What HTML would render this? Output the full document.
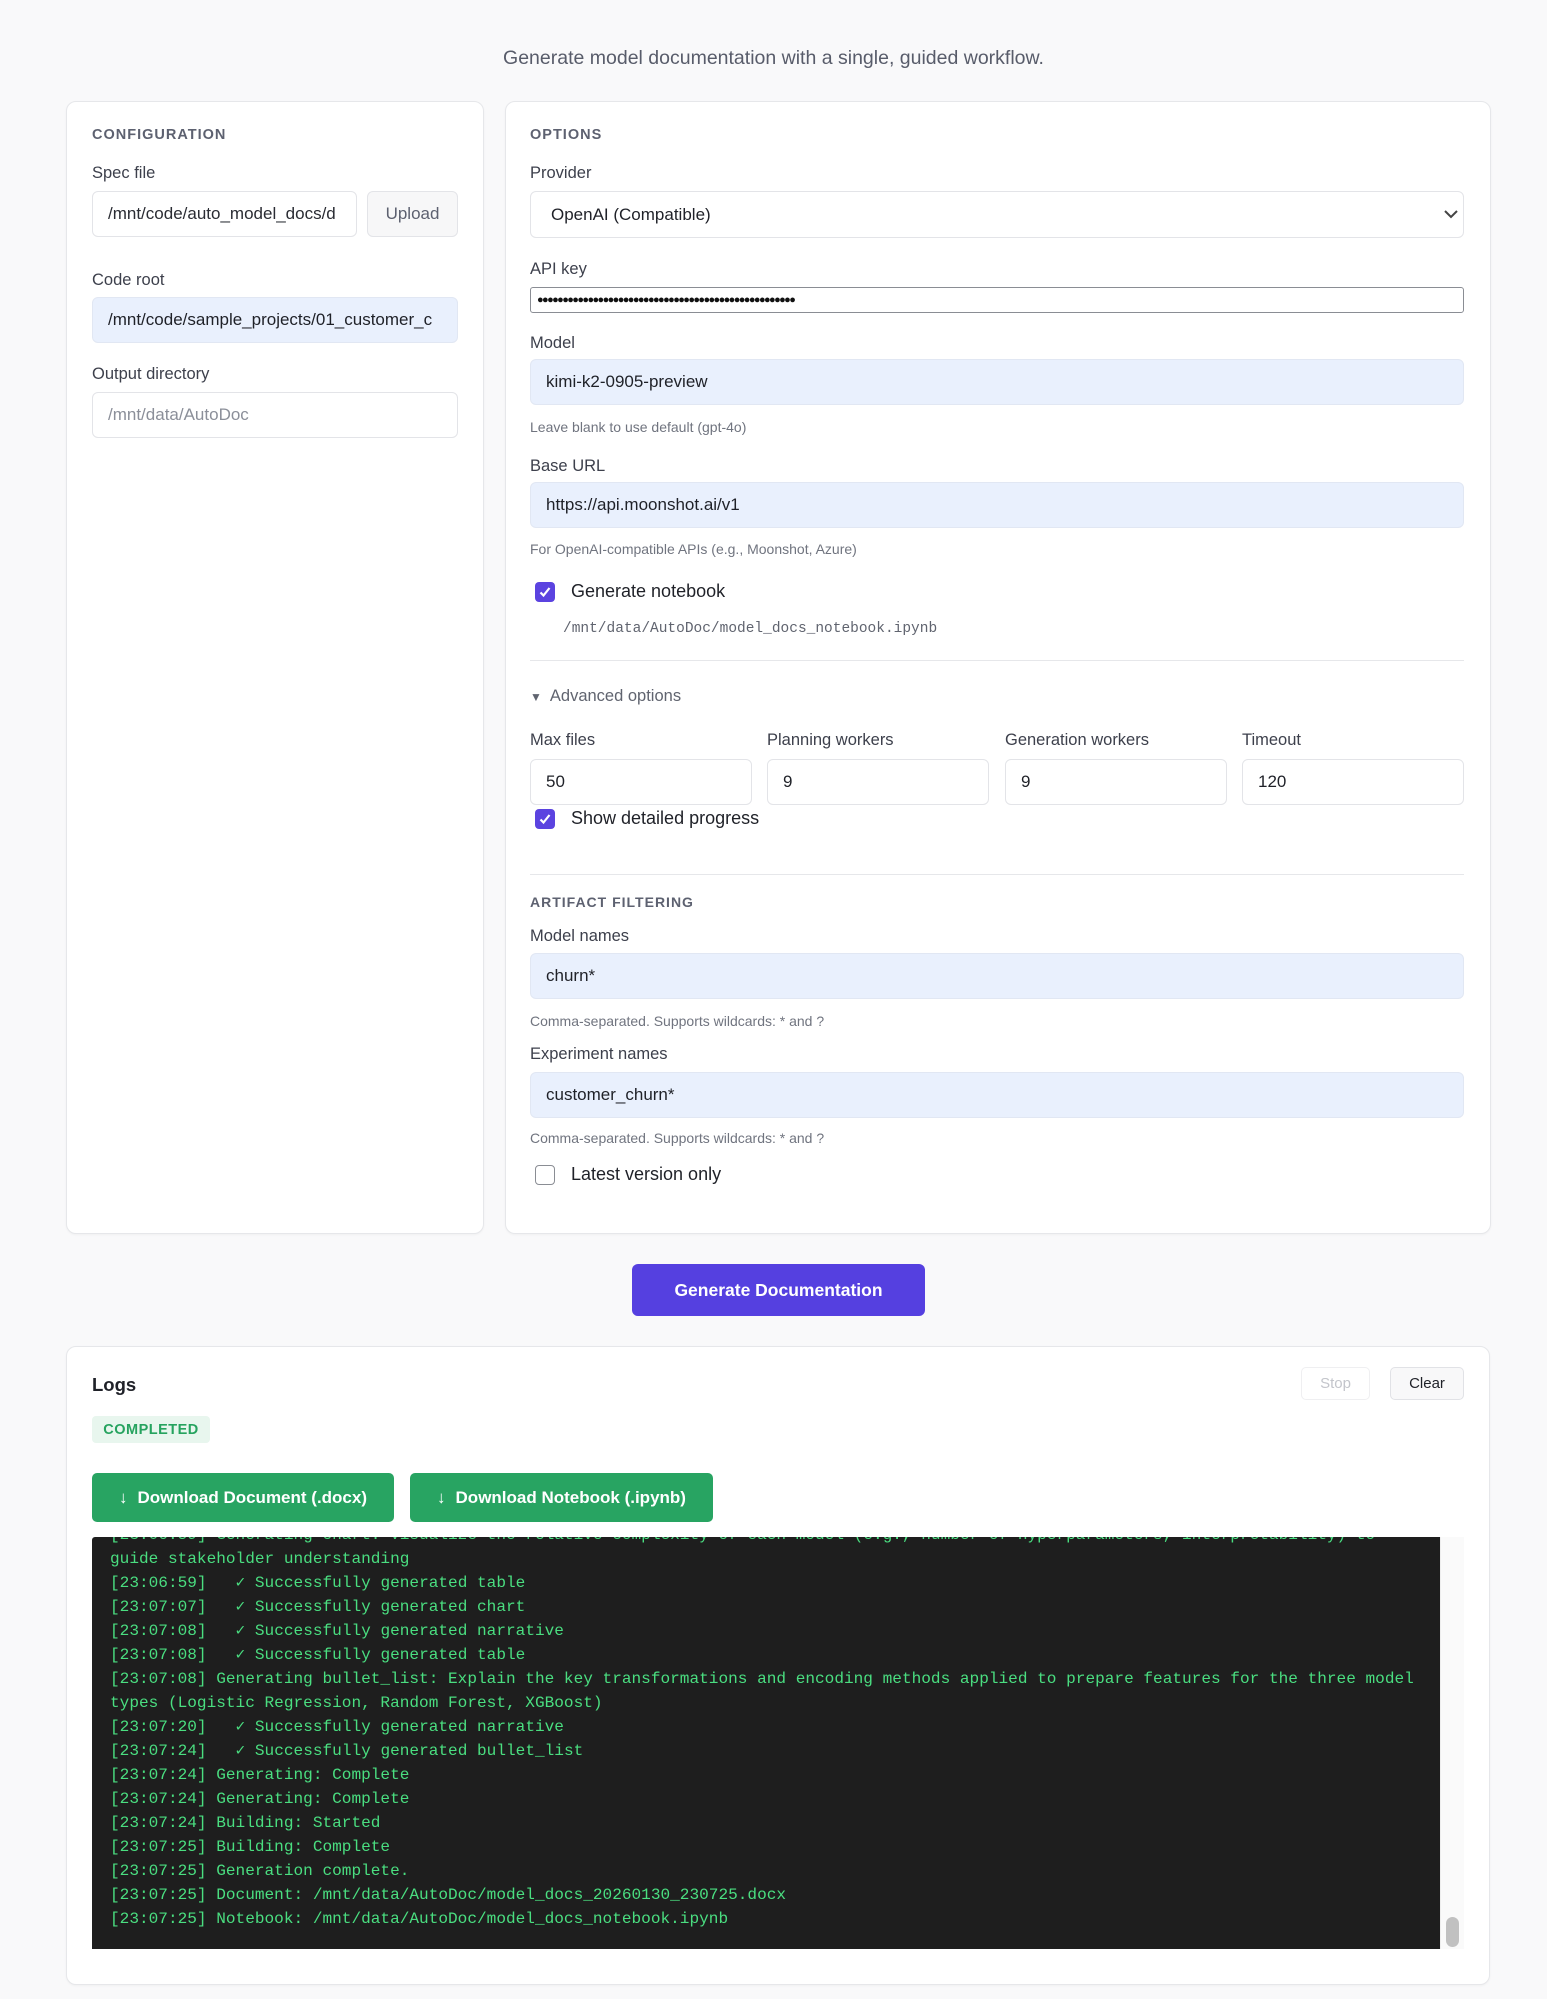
<!DOCTYPE html>
<html><head><meta charset="utf-8"><style>
*{box-sizing:border-box;margin:0;padding:0}
body{width:1547px;height:1999px;background:#f9f9fa;font-family:"Liberation Sans",sans-serif;color:#1f2128;position:relative;overflow:hidden}
.a{position:absolute}
.card{position:absolute;background:#fff;border:1px solid #e6e7ea;border-radius:10px;box-shadow:0 1px 2px rgba(0,0,0,.04)}
.sec{font-size:14.5px;font-weight:bold;letter-spacing:1px;color:#5d6170}
.lbl{font-size:16.5px;color:#3d404c;font-weight:500}
.in{position:absolute;border:1px solid #e3e4e8;border-radius:6px;background:#fff;font-size:17px;padding-left:15px;display:flex;align-items:center;color:#1f2128;white-space:nowrap;overflow:hidden}
.fill{background:#e9f0fd;border-color:#e1e7f3}
.hint{font-size:14px;color:#70747f}
.cb{position:absolute;width:20px;height:20px;border-radius:4px;background:#5b43e0;}
.cb svg{position:absolute;left:3px;top:3px}
.cbl{font-size:18px;color:#1f2128;font-weight:500}
.div{position:absolute;height:1px;background:#e6e7ea}
.term div{height:24px;line-height:24px;white-space:pre}
</style></head><body>
<div class="a" style="left:0;width:1547px;top:47px;text-align:center;font-size:19.5px;color:#585c6a">Generate model documentation with a single, guided workflow.</div>

<div class="card" style="left:66px;top:101px;width:418px;height:1133px"></div>
<div class="a sec" style="left:92px;top:127px">CONFIGURATION</div>
<div class="a lbl" style="left:92px;top:164px">Spec file</div>
<div class="in" style="left:92px;top:191px;width:265px;height:46px;color:#2a2c33">/mnt/code/auto_model_docs/d</div>
<div class="in" style="left:367px;top:191px;width:91px;height:46px;background:#f7f7f8;color:#5d6170;justify-content:center;padding:0;font-size:17px">Upload</div>
<div class="a lbl" style="left:92px;top:271px">Code root</div>
<div class="in fill" style="left:92px;top:297px;width:366px;height:46px">/mnt/code/sample_projects/01_customer_c</div>
<div class="a lbl" style="left:92px;top:365px">Output directory</div>
<div class="in" style="left:92px;top:392px;width:366px;height:46px;color:#8b8f99">/mnt/data/AutoDoc</div>

<div class="card" style="left:505px;top:101px;width:986px;height:1133px"></div>
<div class="a sec" style="left:530px;top:127px">OPTIONS</div>
<div class="a lbl" style="left:530px;top:164px">Provider</div>
<div class="in" style="left:530px;top:191px;width:934px;height:47px;padding-left:20px">OpenAI (Compatible)</div>
<svg class="a" style="left:1443px;top:208px" width="16" height="12" viewBox="0 0 16 12"><path d="M2 3l6 6 6-6" fill="none" stroke="#444" stroke-width="2"/></svg>
<div class="a lbl" style="left:530px;top:260px">API key</div>
<div class="in" style="left:530px;top:287px;width:934px;height:26px;border:1px solid #8a8d94;border-radius:3px;padding-left:6px;font-size:11px;letter-spacing:-1.6px;color:#111">●●●●●●●●●●●●●●●●●●●●●●●●●●●●●●●●●●●●●●●●●●●●●●●●●●●</div>
<div class="a lbl" style="left:530px;top:334px">Model</div>
<div class="in fill" style="left:530px;top:359px;width:934px;height:46px">kimi-k2-0905-preview</div>
<div class="a hint" style="left:530px;top:419px">Leave blank to use default (gpt-4o)</div>
<div class="a lbl" style="left:530px;top:457px">Base URL</div>
<div class="in fill" style="left:530px;top:482px;width:934px;height:46px">https://api.moonshot.ai/v1</div>
<div class="a hint" style="left:530px;top:541px">For OpenAI-compatible APIs (e.g., Moonshot, Azure)</div>
<div class="cb" style="left:535px;top:582px"><svg width="14" height="14" viewBox="0 0 14 14"><path d="M2.5 7.5l3 3 6-7.5" fill="none" stroke="#fff" stroke-width="2.2"/></svg></div>
<div class="a cbl" style="left:571px;top:581px">Generate notebook</div>
<div class="a" style="left:563px;top:621px;font-family:'Liberation Mono',monospace;font-size:14.5px;color:#60646f">/mnt/data/AutoDoc/model_docs_notebook.ipynb</div>
<div class="div" style="left:530px;top:660px;width:934px"></div>
<div class="a" style="left:530px;top:687px;font-size:16.5px;color:#60646f"><span style="font-size:12px;margin-right:8px">▼</span>Advanced options</div>
<div class="a lbl" style="left:530px;top:731px">Max files</div>
<div class="a lbl" style="left:767px;top:731px">Planning workers</div>
<div class="a lbl" style="left:1005px;top:731px">Generation workers</div>
<div class="a lbl" style="left:1242px;top:731px">Timeout</div>
<div class="in" style="left:530px;top:759px;width:222px;height:46px">50</div>
<div class="in" style="left:767px;top:759px;width:222px;height:46px">9</div>
<div class="in" style="left:1005px;top:759px;width:222px;height:46px">9</div>
<div class="in" style="left:1242px;top:759px;width:222px;height:46px">120</div>
<div class="cb" style="left:535px;top:809px"><svg width="14" height="14" viewBox="0 0 14 14"><path d="M2.5 7.5l3 3 6-7.5" fill="none" stroke="#fff" stroke-width="2.2"/></svg></div>
<div class="a cbl" style="left:571px;top:808px">Show detailed progress</div>
<div class="div" style="left:530px;top:874px;width:934px"></div>
<div class="a sec" style="left:530px;top:894px;font-size:14px">ARTIFACT FILTERING</div>
<div class="a lbl" style="left:530px;top:927px">Model names</div>
<div class="in fill" style="left:530px;top:953px;width:934px;height:46px">churn*</div>
<div class="a hint" style="left:530px;top:1013px">Comma-separated. Supports wildcards: * and ?</div>
<div class="a lbl" style="left:530px;top:1045px">Experiment names</div>
<div class="in fill" style="left:530px;top:1072px;width:934px;height:46px">customer_churn*</div>
<div class="a hint" style="left:530px;top:1130px">Comma-separated. Supports wildcards: * and ?</div>
<div class="a" style="left:535px;top:1165px;width:20px;height:20px;border:1.5px solid #8a8d94;border-radius:4px;background:#fff"></div>
<div class="a cbl" style="left:571px;top:1164px">Latest version only</div>

<div class="a" style="left:632px;top:1264px;width:293px;height:52px;background:#5540e0;border-radius:6px;color:#fff;font-weight:bold;font-size:17.5px;display:flex;align-items:center;justify-content:center">Generate Documentation</div>

<div class="card" style="left:66px;top:1346px;width:1424px;height:639px"></div>
<div class="a" style="left:92px;top:1374px;font-size:18.5px;font-weight:bold;color:#1f2128">Logs</div>
<div class="a" style="left:1301px;top:1367px;width:69px;height:33px;border:1px solid #efeff1;border-radius:5px;color:#c3c5cb;font-size:15px;display:flex;align-items:center;justify-content:center">Stop</div>
<div class="a" style="left:1390px;top:1367px;width:74px;height:33px;border:1px solid #e1e2e6;border-radius:5px;background:#f8f8f9;color:#1f2128;font-size:15px;font-weight:500;display:flex;align-items:center;justify-content:center">Clear</div>
<div class="a" style="left:92px;top:1416px;width:118px;height:27px;background:#e8f6ee;border-radius:4px;color:#26a35f;font-size:14.5px;font-weight:bold;letter-spacing:.5px;display:flex;align-items:center;justify-content:center">COMPLETED</div>
<div class="a" style="left:92px;top:1473px;width:302px;height:49px;background:#28a462;border-radius:5px;color:#fff;font-weight:bold;font-size:17px;display:flex;align-items:center;justify-content:center"><span style="margin-right:10px">↓</span>Download Document (.docx)</div>
<div class="a" style="left:410px;top:1473px;width:303px;height:49px;background:#28a462;border-radius:5px;color:#fff;font-weight:bold;font-size:17px;display:flex;align-items:center;justify-content:center"><span style="margin-right:10px">↓</span>Download Notebook (.ipynb)</div>

<div class="a" style="left:1440px;top:1537px;width:24px;height:412px;background:#fafafa;border-left:1px solid #eee"></div>
<div class="a" style="left:1446px;top:1917px;width:13px;height:30px;background:#c1c1c1;border-radius:7px"></div>
<div class="a term" style="left:92px;top:1537px;width:1348px;height:412px;background:#1e1e1e;overflow:hidden;font-family:'Liberation Mono',monospace;font-size:16.1px;color:#4ade80;padding-left:18px;border-radius:3px 0 0 0">
<div style="margin-top:-14px">[23:06:59] Generating chart: Visualize the relative complexity of each model (e.g., number of hyperparameters, interpretability) to</div>
<div>guide stakeholder understanding</div>
<div>[23:06:59]   ✓ Successfully generated table</div>
<div>[23:07:07]   ✓ Successfully generated chart</div>
<div>[23:07:08]   ✓ Successfully generated narrative</div>
<div>[23:07:08]   ✓ Successfully generated table</div>
<div>[23:07:08] Generating bullet_list: Explain the key transformations and encoding methods applied to prepare features for the three model</div>
<div>types (Logistic Regression, Random Forest, XGBoost)</div>
<div>[23:07:20]   ✓ Successfully generated narrative</div>
<div>[23:07:24]   ✓ Successfully generated bullet_list</div>
<div>[23:07:24] Generating: Complete</div>
<div>[23:07:24] Generating: Complete</div>
<div>[23:07:24] Building: Started</div>
<div>[23:07:25] Building: Complete</div>
<div>[23:07:25] Generation complete.</div>
<div>[23:07:25] Document: /mnt/data/AutoDoc/model_docs_20260130_230725.docx</div>
<div>[23:07:25] Notebook: /mnt/data/AutoDoc/model_docs_notebook.ipynb</div>
</div>
</body></html>
